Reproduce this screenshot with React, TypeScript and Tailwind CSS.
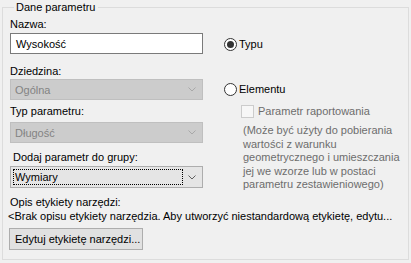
import React from "react";

function Chevron({ color }: { color: string }) {
  return (
    <svg width="8" height="5" viewBox="0 0 8 5" className="shrink-0">
      <polyline points="0.5,0.5 4,4 7.5,0.5" fill="none" stroke={color} strokeWidth="1" />
    </svg>
  );
}

function Select({ value, disabled, focused }: { value: string; disabled?: boolean; focused?: boolean }) {
  return (
    <div
      className={
        disabled
          ? "h-[21px] w-[193px] border border-[#bfbfbf] bg-[#cccccc] text-[#838383] flex items-center justify-between pl-[4px] pr-[6px]"
          : "h-[22px] w-[193px] border border-[#adadad] bg-[#e5e5e5] text-black flex items-center justify-between pl-[2px] pr-[6px]"
      }
    >
      {focused ? (
        <div className="h-[16px] w-[170px] border border-dotted border-black flex items-center pl-[1px]">{value}</div>
      ) : (
        <span>{value}</span>
      )}
      <Chevron color={disabled ? "#a8a8a8" : "#606060"} />
    </div>
  );
}

export default function App() {
  return (
    <div className="w-[411px] h-[263px] bg-[#f0f0f0] text-black text-[11px] leading-[14px] font-['Liberation_Sans',Arial,sans-serif] overflow-hidden">
      <fieldset className="ml-[2px] w-[407px] h-[260px] border border-[#dcdcdc] pl-[7px] pr-0 m-0">
        <legend className="ml-[4px] px-[2px]">Dane parametru</legend>
        <div className="flex">
          <div className="flex flex-col w-[193px]">
            <div className="mt-[3px]">Nazwa:</div>
            <div className="mt-[2px] h-[21px] w-[193px] border border-[#7a7a7a] bg-white flex items-center pl-[5px]">Wysokość</div>
            <div className="mt-[10px] text-black">Dziedzina:</div>
            <div className="mt-[1px]">
              <Select value="Ogólna" disabled />
            </div>
            <div className="mt-[4px]">Typ parametru:</div>
            <div className="mt-[4px]">
              <Select value="Długość" disabled />
            </div>
            <div className="mt-[7px] ml-[3px]">Dodaj parametr do grupy:</div>
            <div className="mt-[2px]">
              <Select value="Wymiary" focused />
            </div>
          </div>
          <div className="flex flex-col ml-[21px]">
            <div className="mt-[23px] flex items-center gap-[2px]">
              <div className="w-[13px] h-[13px] rounded-full border border-[#333333] bg-white flex items-center justify-center">
                <div className="w-[7px] h-[7px] rounded-full bg-[#333333]" />
              </div>
              <span>Typu</span>
            </div>
            <div className="mt-[31px] flex items-center gap-[2px]">
              <div className="w-[13px] h-[13px] rounded-full border border-[#333333] bg-white" />
              <span>Elementu</span>
            </div>
            <div className="mt-[8px] ml-[17px] flex items-center gap-[4px] text-[#6d6d6d]">
              <div className="w-[13px] h-[13px] border border-[#cccccc] bg-[#f7f7f7]" />
              <span>Parametr raportowania</span>
            </div>
            <div className="mt-[6px] ml-[19px] text-[#6d6d6d] leading-[13.5px] whitespace-nowrap">
              (Może być użyty do pobierania
              <br />
              wartości z warunku
              <br />
              geometrycznego i umieszczania
              <br />
              jej we wzorze lub w postaci
              <br />
              parametru zestawieniowego)
            </div>
          </div>
        </div>
        <div className="mt-[3px]">Opis etykiety narzędzi:</div>
        <div className="ml-[-2px] whitespace-nowrap">
          &lt;Brak opisu etykiety narzędzia. Aby utworzyć niestandardową etykietę, edytu...
        </div>
        <button className="mt-[5px] ml-[-1px] h-[22px] w-[134px] border border-[#adadad] bg-[#e1e1e1] flex items-center pl-[5px]">
          Edytuj etykietę narzędzi...
        </button>
      </fieldset>
    </div>
  );
}
